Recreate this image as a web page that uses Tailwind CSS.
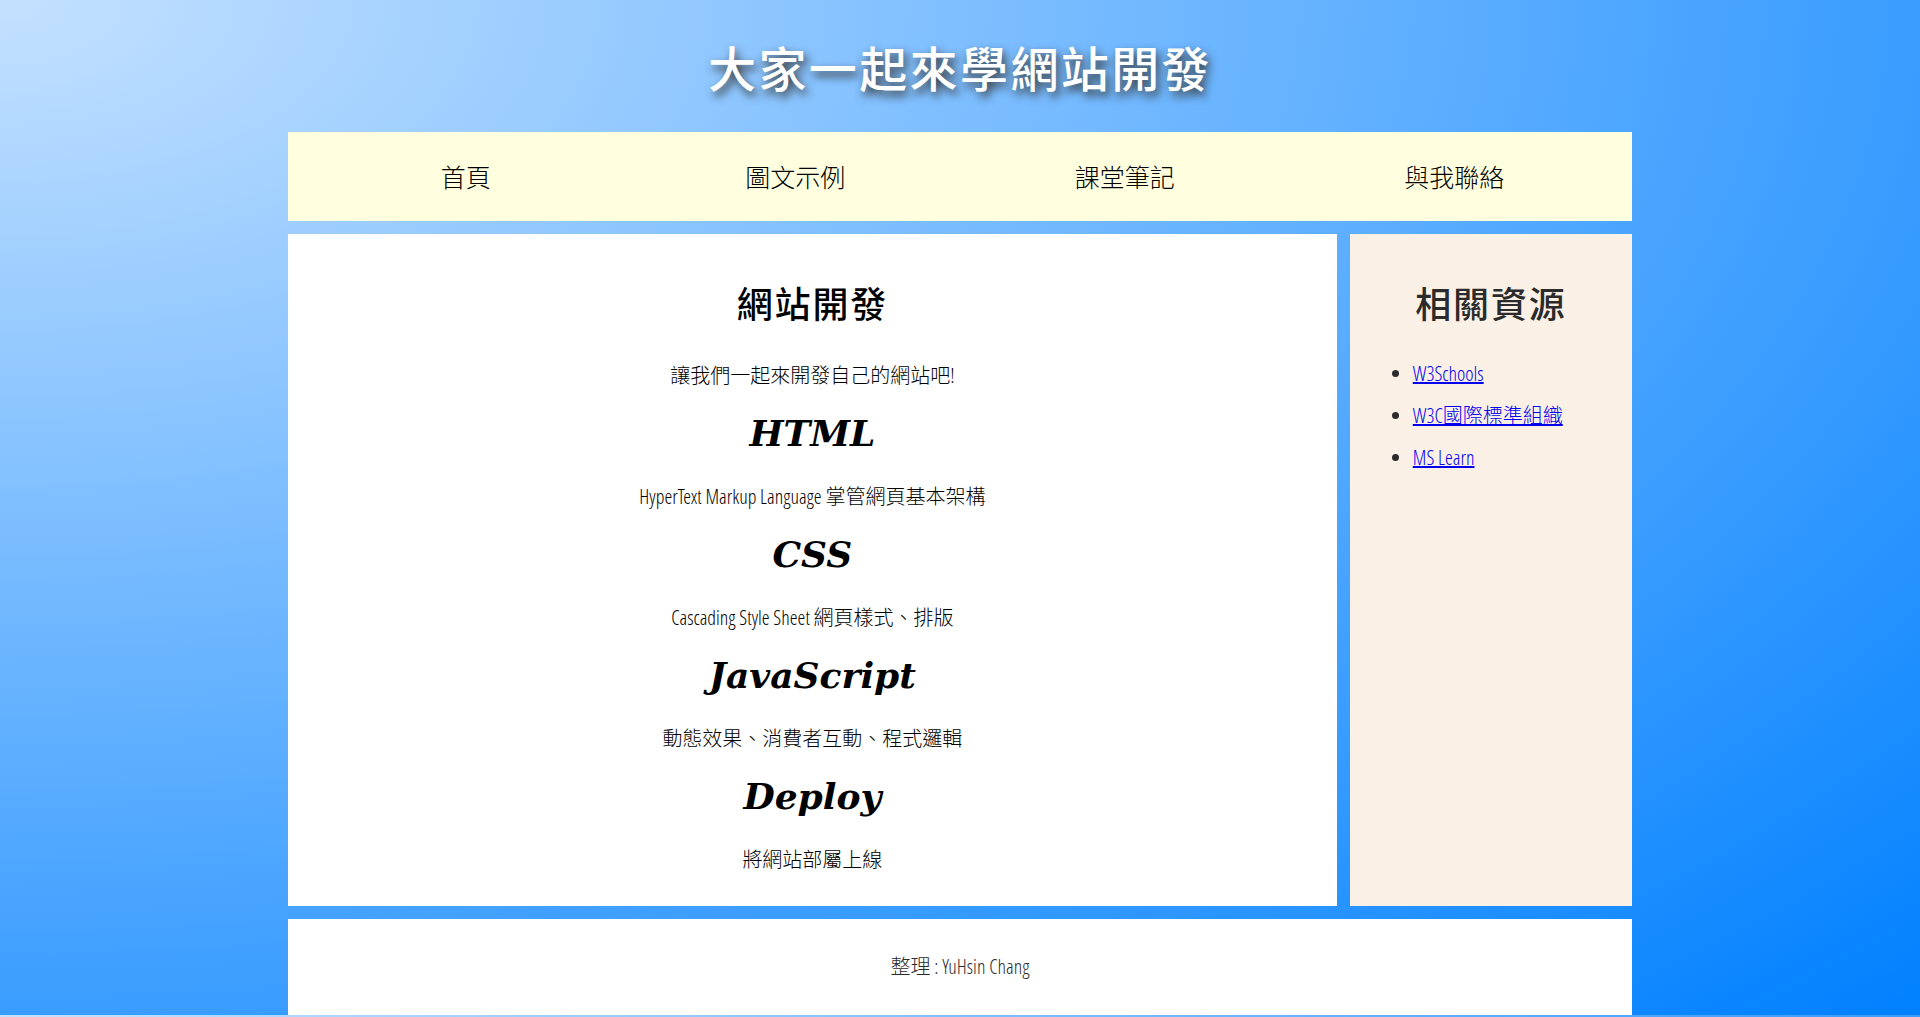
<!DOCTYPE html>
<html lang="zh-Hant">
<head>
<meta charset="utf-8">
<meta name="viewport" content="width=device-width, initial-scale=1">
<title>大家一起來學網站開發</title>
<script src="https://cdn.jsdelivr.net/npm/@tailwindcss/browser@4"></script>
</head>
<body class="bg-[radial-gradient(ellipse_at_top_left,#c4e1ff,#0080ff)] font-['Open_Sans_Condensed_Light','Open_Sans_Light_Condensed','OpenSans-CondensedLight','Open_Sans_Cond_Light','Roboto_Condensed','Liberation_Sans_Narrow','Noto_Sans_CJK_TC',sans-serif] text-xl/8 font-light text-[#2b2b2b]">
<div class="mx-auto flex w-[70%] flex-col">
  <header class="py-9 text-center">
    <h1 class="text-5xl/[60px] font-medium tracking-wider text-white [text-shadow:3px_5px_10px_#333] font-['Noto_Sans_CJK_TC',sans-serif]">大家一起來學網站開發</h1>
  </header>
  <nav class="bg-[#ffffdf] px-[13px] pt-0.5">
    <ul class="grid grid-cols-4 text-center text-[25px]/[87px] text-black">
      <li><a href="#">首頁</a></li>
      <li><a href="#">圖文示例</a></li>
      <li><a href="#">課堂筆記</a></li>
      <li><a href="#">與我聯絡</a></li>
    </ul>
  </nav>
  <div class="mt-[13px] flex gap-[13px]">
    <main class="flex-1 bg-white pt-[47px] pb-[30px] text-center text-black">
      <h2 class="mb-[31px] text-4xl/[48px] font-medium tracking-wider">網站開發</h2>
      <p>讓我們一起來開發自己的網站吧!</p>
      <h3 class="mt-[21px] mb-7 text-4xl/10 font-bold italic font-['DejaVu_Serif',serif]">HTML</h3>
      <p>HyperText Markup Language 掌管網頁基本架構</p>
      <h3 class="mt-[21px] mb-7 text-4xl/10 font-bold italic font-['DejaVu_Serif',serif]">CSS</h3>
      <p>Cascading Style Sheet 網頁樣式、排版</p>
      <h3 class="mt-[21px] mb-7 text-4xl/10 font-bold italic font-['DejaVu_Serif',serif]">JavaScript</h3>
      <p>動態效果、消費者互動、程式邏輯</p>
      <h3 class="mt-[21px] mb-7 text-4xl/10 font-bold italic font-['DejaVu_Serif',serif]">Deploy</h3>
      <p>將網站部屬上線</p>
    </main>
    <aside class="w-[21%] bg-[#faf0e6] px-[23px] pt-[47px]">
      <h2 class="mb-6 text-center text-4xl/[48px] font-medium tracking-wider">相關資源</h2>
      <ul class="list-disc pl-10 leading-[42px]">
        <li><a href="#" class="text-[#0000ee] underline">W3Schools</a></li>
        <li><a href="#" class="text-[#0000ee] underline">W3C國際標準組織</a></li>
        <li><a href="#" class="text-[#0000ee] underline">MS Learn</a></li>
      </ul>
    </aside>
  </div>
  <footer class="mt-[13px] bg-white text-center leading-[96px]">
    <p>整理 : YuHsin Chang</p>
  </footer>
</div>
</body>
</html>
